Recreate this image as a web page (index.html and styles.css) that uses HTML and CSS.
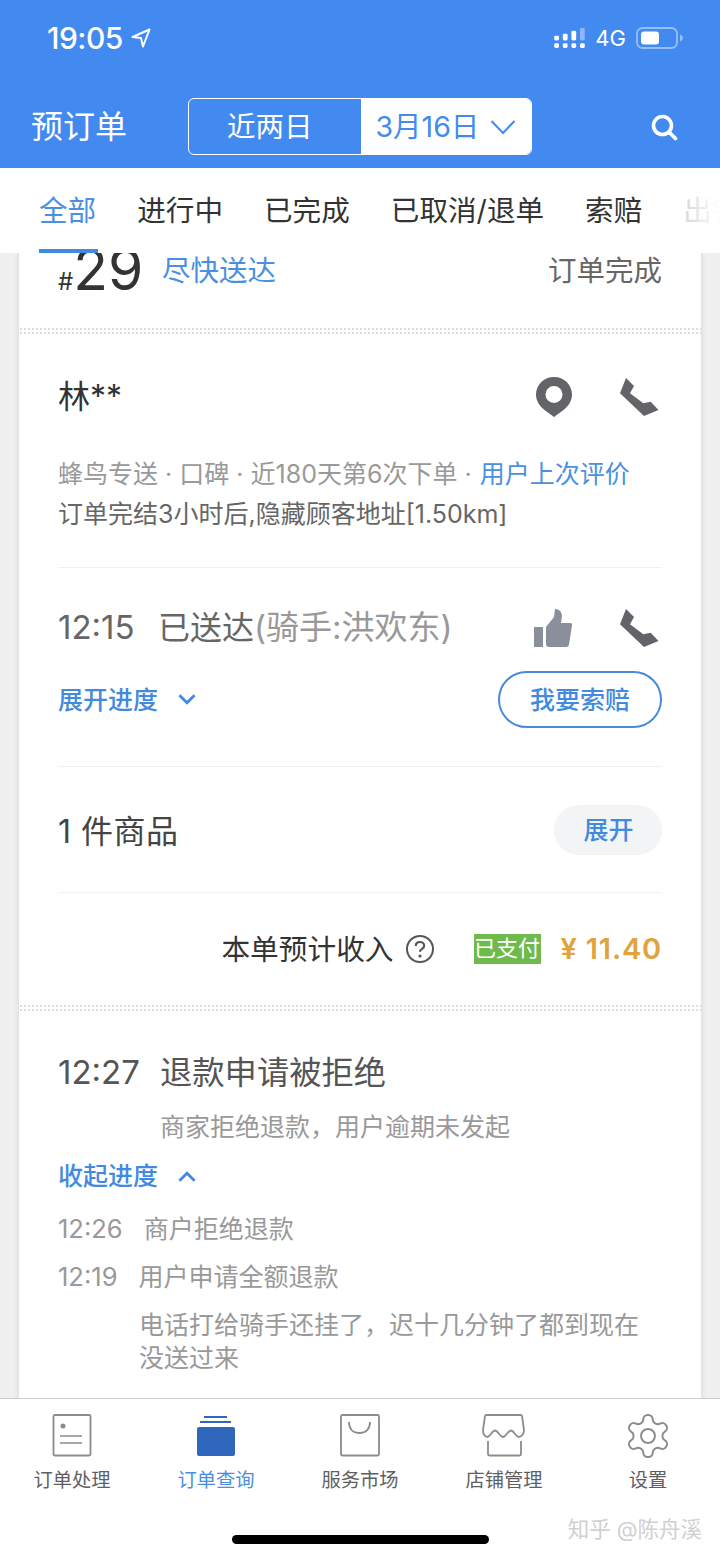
FILE: index.html
```html
<!DOCTYPE html>
<html lang="zh-CN">
<head>
  <meta charset="UTF-8" />
  <meta name="viewport" content="width=device-width, initial-scale=1.0"/>
  <title>预订单</title>
  <link rel="stylesheet" href="styles.css">
</head>
<body>

  <header class="top">
    <div class="status">
      <div class="status-left">
        <span class="clock">19:05</span>
        <svg class="arrow" viewBox="0 0 20 20"><path d="M18.5 1.5 1.5 9l8.5 1 2 8.500z" fill="none" stroke="#fff" stroke-width="2" stroke-linejoin="round"/></svg>
      </div>
      <div class="status-right">
        <svg class="signal" viewBox="0 0 32 22" fill="#fff">
          <rect x="0" y="8" width="5" height="5" rx="1.500"/><rect x="0" y="16" width="5" height="5" rx="1.500"/>
          <rect x="9" y="6" width="5" height="7" rx="1.500"/><rect x="9" y="16" width="5" height="5" rx="1.500"/>
          <rect x="18" y="3" width="5" height="10" rx="1.500"/><rect x="18" y="16" width="5" height="5" rx="1.500"/>
          <rect x="27" y="0" width="5" height="13" rx="1.500" opacity=".4"/><rect x="27" y="16" width="5" height="5" rx="1.500"/>
        </svg>
        <span class="net">4G</span>
        <svg class="battery" viewBox="0 0 48 22">
          <rect x="1" y="1" width="40" height="20" rx="5.500" fill="none" stroke="#fff" stroke-opacity=".45" stroke-width="1.800"/>
          <rect x="5" y="4.500" width="18" height="13" rx="3" fill="#fff"/>
          <path d="M44 7.500c2 .8 3 2 3 3.500s-1 2.700-3 3.500z" fill="#fff" fill-opacity=".45"/>
        </svg>
      </div>
    </div>
    <div class="nav">
      <div class="nav-title">预订单</div>
      <div class="segment">
        <div class="seg-item">近两日</div>
        <div class="seg-item seg-on">3月16日
          <svg class="seg-arrow" viewBox="0 0 26 16"><path d="M1.500 2 13 14 24.500 2" fill="none" stroke="#428af0" stroke-width="2"/></svg>
        </div>
      </div>
      <svg class="search" viewBox="0 0 28 28"><circle cx="12.500" cy="12.500" r="9" fill="none" stroke="#fff" stroke-width="3.600"/><path d="m19 19 6.500 6.500" stroke="#fff" stroke-width="3.800" stroke-linecap="round"/></svg>
    </div>
  </header>

  <nav class="tabs">
    <a class="tab tab-on">全部</a>
    <a class="tab">进行中</a>
    <a class="tab">已完成</a>
    <a class="tab">已取消/退单</a>
    <a class="tab">索赔</a>
    <a class="tab tab-off">出错</a>
  </nav>

  <main class="list">
    <section class="card">
      <div class="order-head">
        <div class="order-no"><span class="hash">#</span><span class="num">29</span></div>
        <div class="order-tag">尽快送达</div>
        <div class="order-state">订单完成</div>
      </div>
      <div class="dots"></div>

      <div class="customer">
        <div class="row-between">
          <div class="customer-name">林**</div>
          <div class="icon-pair">
            <svg class="ico-pin" viewBox="0 0 36 40"><path fill-rule="evenodd" d="M18 0C8 0 0 7.800 0 17.500 0 24 4 29.500 8.500 33L18 40l9.500-7C32 29.500 36 24 36 17.500 36 7.800 28 0 18 0zm0 9a8.500 8.500 0 1 1 0 17 8.500 8.500 0 0 1 0-17z" fill="#636468"/></svg>
            <svg class="ico-phone" viewBox="0 0 40 40"><path d="M6 1l8 8-4 7.300L23.300 26.300l7.400-1.600L38.500 33 24 39 0 16.300z" fill="#636468"/></svg>
          </div>
        </div>
        <p class="meta">蜂鸟专送 · 口碑 · 近180天第6次下单 · <span class="link">用户上次评价</span></p>
        <p class="meta meta-dark">订单完结3小时后,隐藏顾客地址[1.50km]</p>
      </div>

      <div class="rule"></div>

      <div class="delivery">
        <div class="row-between">
          <div class="delivery-text"><span class="time time-short">12:15</span><span class="delivery-state">已送达</span><span class="rider">(骑手:洪欢东)</span></div>
          <div class="icon-pair">
            <svg class="ico-thumb" viewBox="0 0 38 38"><rect x="0" y="18" width="9" height="20" fill="#8b8e9b"/><path d="M12 18 20 8l1-8c4 0 7 3 7 7l-1 7h9c1.500 0 2.300 1 2 2.500l-3 19c-.3 1.500-1 2.500-3 2.500H15c-2 0-3-1-3-3z" fill="#8b8e9b"/></svg>
            <svg class="ico-phone" viewBox="0 0 40 40"><path d="M6 1l8 8-4 7.300L23.300 26.300l7.400-1.600L38.500 33 24 39 0 16.300z" fill="#636468"/></svg>
          </div>
        </div>
        <div class="row-between delivery-more">
          <div class="toggle">展开进度
            <svg class="chev" viewBox="0 0 18 12"><path d="m2 2 7 7 7-7" fill="none" stroke="#428ae0" stroke-width="2.600"/></svg>
          </div>
          <button class="claim">我要索赔</button>
        </div>
      </div>

      <div class="rule"></div>

      <div class="goods">
        <div class="goods-count">1 件商品</div>
        <button class="expand">展开</button>
      </div>

      <div class="rule"></div>

      <div class="income">
        <span class="income-label">本单预计收入</span>
        <svg class="ico-help" viewBox="0 0 30 30"><circle cx="15" cy="15" r="13" fill="none" stroke="#55565a" stroke-width="2"/><path d="M10.800 12c0-2.500 1.900-4 4.200-4s4.200 1.500 4.200 3.800c0 3.200-4.200 3-4.200 6" fill="none" stroke="#55565a" stroke-width="2.200"/><circle cx="15" cy="22" r="1.600" fill="#55565a"/></svg>
        <span class="paid">已支付</span>
        <span class="amount">¥ 11.40</span>
      </div>
      <div class="dots"></div>

      <div class="refund">
        <div class="refund-head"><span class="time">12:27</span><span class="refund-title">退款申请被拒绝</span></div>
        <p class="refund-sub">商家拒绝退款，用户逾期未发起</p>
        <div class="toggle refund-toggle">收起进度
          <svg class="chev" viewBox="0 0 18 12"><path d="m2 10 7-7 7 7" fill="none" stroke="#428ae0" stroke-width="2.600"/></svg>
        </div>
        <div class="log log-first"><span class="log-time">12:26</span><span>商户拒绝退款</span></div>
        <div class="log"><span class="log-time">12:19</span><span>用户申请全额退款</span></div>
        <p class="log-note">电话打给骑手还挂了，迟十几分钟了都到现在没送过来</p>
      </div>
    </section>
  </main>

  <footer class="bottom">
    <div class="bar">
      <div class="bar-item">
        <svg class="bar-ico" viewBox="0 0 44 44"><rect x="3.500" y="1" width="37" height="40.500" rx="1.500" fill="none" stroke="#8c8c8c" stroke-width="1.800"/><circle cx="13" cy="12" r="2.500" fill="#8c8c8c"/><path d="M10 22h22M10 29h22" stroke="#8c8c8c" stroke-width="1.600"/></svg>
        <span>订单处理</span>
      </div>
      <div class="bar-item bar-on">
        <svg class="bar-ico" viewBox="0 0 44 44"><path d="M10 3h23M6 8h31" stroke="#2f67bd" stroke-width="1.800"/><rect x="3" y="13" width="38" height="29" rx="2" fill="#2f67bd"/></svg>
        <span>订单查询</span>
      </div>
      <div class="bar-item">
        <svg class="bar-ico" viewBox="0 0 44 44"><rect x="3" y="1" width="38" height="40.500" rx="1.500" fill="none" stroke="#8c8c8c" stroke-width="1.800"/><path d="M11 8c0 7 4 11 10.500 11S32 15 32 8" fill="none" stroke="#8c8c8c" stroke-width="1.800"/></svg>
        <span>服务市场</span>
      </div>
      <div class="bar-item">
        <svg class="bar-ico" viewBox="0 0 44 44"><path d="M4.500 1h34c1 0 1.500.5 1.600 1.500L42 16c0 3-2 6-5 7-3 .5-5-6.500-8-6.500S24 23 21 23s-5-6.500-8-6.500S8 23.500 5 23c-3-1-4-4-4-7L2.900 2.500C3 1.500 3.500 1 4.500 1z" fill="none" stroke="#8c8c8c" stroke-width="1.800" stroke-linejoin="round"/><path d="M6 27v13c0 1 .5 1.500 1.500 1.500h30c1 0 1.500-.5 1.500-1.500V27" fill="none" stroke="#8c8c8c" stroke-width="1.800"/></svg>
        <span>店铺管理</span>
      </div>
      <div class="bar-item">
        <svg class="bar-ico bar-gear" viewBox="0 0 24 24"><path d="M12.220 2h-.44a2 2 0 0 0-2 2v.18a2 2 0 0 1-1 1.730l-.43.25a2 2 0 0 1-2 0l-.15-.08a2 2 0 0 0-2.730.73l-.22.38a2 2 0 0 0 .73 2.730l.15.1a2 2 0 0 1 1 1.720v.51a2 2 0 0 1-1 1.740l-.15.09a2 2 0 0 0-.73 2.730l.22.38a2 2 0 0 0 2.730.73l.15-.08a2 2 0 0 1 2 0l.43.25a2 2 0 0 1 1 1.730V20a2 2 0 0 0 2 2h.44a2 2 0 0 0 2-2v-.18a2 2 0 0 1 1-1.730l.43-.25a2 2 0 0 1 2 0l.15.08a2 2 0 0 0 2.730-.73l.22-.39a2 2 0 0 0-.73-2.730l-.15-.08a2 2 0 0 1-1-1.740v-.5a2 2 0 0 1 1-1.740l.15-.09a2 2 0 0 0 .73-2.730l-.22-.38a2 2 0 0 0-2.730-.73l-.15.08a2 2 0 0 1-2 0l-.43-.25a2 2 0 0 1-1-1.730V4a2 2 0 0 0-2-2z" fill="none" stroke="#8c8c8c" stroke-width=".95"/><circle cx="12" cy="12" r="3.300" fill="none" stroke="#8c8c8c" stroke-width=".95"/></svg>
        <span>设置</span>
      </div>
    </div>
    <div class="home-line"></div>
    <div class="watermark">知乎 @陈舟溪</div>
  </footer>

</body>
</html>
```

FILE: styles.css
```css
* {
  box-sizing: border-box;
}

html, body {
  margin: 0;
  padding: 0;
}

body {
  width: 720px;
  height: 1558px;
  overflow: hidden;
  display: flex;
  flex-direction: column;
  background: #f0f0f0;
  color: #333;
  font-family: Inter, 'Noto Sans CJK SC', sans-serif;
  font-weight: 400;
}

p {
  margin: 0;
}

/* header */
.top {
  height: 168px;
  background: #428af0;
  color: #fff;
  flex: none;
}

.status {
  height: 76px;
  display: flex;
  justify-content: space-between;
  align-items: center;
  padding: 0 36px 0 47px;
}

.status-left, .status-right {
  display: flex;
  align-items: center;
}

.clock {
  font-size: 30px;
  font-weight: 500;
  letter-spacing: -0.5px;
}

.arrow {
  width: 20px;
  height: 20px;
  margin-left: 8px;
}

.signal {
  width: 31px;
  height: 21px;
}

.net {
  font-size: 22px;
  margin: 0 10px 0 10px;
}

.battery {
  width: 48px;
  height: 22px;
}

.nav {
  height: 92px;
  display: flex;
  align-items: flex-start;
  padding: 22px 42px 0 31px;
}

.nav-title {
  width: 157px;
  line-height: 57px;
  font-size: 32px;
}

.segment {
  width: 345px;
  height: 57px;
  display: flex;
  border: 1px solid #fff;
  border-radius: 6px;
  overflow: hidden;
}

.seg-item {
  width: 172px;
  padding-right: 10px;
  line-height: 55px;
  text-align: center;
  font-size: 28.500px;
}

.seg-on {
  flex: 1;
  padding-right: 0;
  display: flex;
  align-items: center;
  justify-content: center;
  gap: 11px;
  background: #fff;
  color: #428af0;
}

.seg-arrow {
  width: 26px;
  height: 16px;
}

.search {
  width: 28px;
  height: 28px;
  margin: 15px 0 0 118px;
}

/* tabs */
.tabs {
  position: relative;
  z-index: 2;
  height: 85px;
  flex: none;
  display: flex;
  background: #fff;
  padding-left: 39px;
  gap: 41px;
  overflow: hidden;
  font-size: 28.600px;
  line-height: 85px;
}

.tabs::after {
  content: "";
  position: absolute;
  right: 0;
  top: 0;
  bottom: 0;
  width: 50px;
  background: linear-gradient(to right, rgba(255, 255, 255, 0.2), #fff);
}

.tab {
  position: relative;
  flex: none;
  color: #333;
}

.tab-on {
  color: #4a90e2;
}

.tab-on::after {
  content: "";
  position: absolute;
  left: 0;
  right: -2px;
  bottom: 0;
  height: 4px;
  background: #428ae0;
}

.tab-off {
  color: #bbb;
}

/* list */
.list {
  flex: 1;
  overflow: hidden;
  padding: 0 19px;
}

.card {
  background: #fff;
  box-shadow: 0 0 6px rgba(0, 0, 0, 0.12);
  padding-bottom: 40px;
}

.order-head {
  height: 78px;
  margin-top: -4px;
  display: flex;
  align-items: flex-start;
  padding: 0 39px;
}

.order-no {
  width: 104px;
  height: 50px;
  margin-top: -4px;
  line-height: 50px;
  white-space: nowrap;
  color: #333;
}

.hash {
  font-size: 24px;
}

.num {
  font-size: 57px;
}

.order-tag {
  margin-top: 2px;
  line-height: 40px;
  font-size: 28.500px;
  color: #4a90e2;
}

.order-state {
  margin: 2px 0 0 auto;
  line-height: 40px;
  font-size: 28.500px;
  color: #666;
}

.dots {
  height: 8px;
  background-image: radial-gradient(circle, #dcdcdc 1.100px, transparent 1.400px);
  background-size: 4px 4px;
}

.rule {
  height: 1px;
  margin: 0 39px;
  background: #f1f1f1;
}

.row-between {
  display: flex;
  justify-content: space-between;
  align-items: center;
}

.customer {
  height: 232px;
  padding: 42px 39px 0;
}

.customer-name {
  font-size: 32px;
  line-height: 40px;
}

.icon-pair {
  display: flex;
  align-items: center;
  width: 126px;
}

.ico-pin {
  width: 36px;
  height: 40px;
}

.ico-phone {
  width: 40px;
  height: 40px;
  margin-left: 48px;
}

.ico-thumb {
  width: 38px;
  height: 38px;
  margin-left: -2px;
}

.meta {
  margin-top: 37px;
  font-size: 25px;
  line-height: 40px;
  color: #999;
  white-space: nowrap;
}

.meta-dark {
  margin-top: 0;
  color: #666;
}

.link {
  margin-left: 1px;
  color: #4a90e2;
}

.delivery {
  height: 198px;
  padding: 39px 39px 0;
}

.delivery-text {
  font-size: 32px;
  line-height: 40px;
  color: #666;
  white-space: nowrap;
}

.time {
  display: inline-block;
  width: 102px;
  font-size: 33px;
  color: #555;
}

.time-short {
  width: 100px;
  color: #666;
}

.rider {
  font-size: 33px;
  color: #999;
}

.delivery-more {
  margin-top: 23px;
}

.toggle {
  display: flex;
  align-items: center;
  gap: 19px;
  font-size: 25px;
  font-weight: 500;
  line-height: 34px;
  color: #428ae0;
}

.chev {
  width: 20px;
  height: 13px;
}

.claim {
  width: 164px;
  height: 57px;
  border: 2px solid #4a8ade;
  border-radius: 29px;
  background: #fff;
  color: #428ae0;
  font: inherit;
  font-size: 25px;
  font-weight: 500;
  padding: 0 0 3px;
}

.goods {
  height: 125px;
  padding: 0 39px;
  display: flex;
  justify-content: space-between;
  align-items: center;
}

.goods-count {
  font-size: 32px;
  letter-spacing: 0.5px;
  margin-top: -2px;
  color: #444;
}

.expand {
  width: 108px;
  height: 50px;
  border: none;
  border-radius: 25px;
  background: #f3f4f5;
  color: #428ae0;
  font: inherit;
  font-size: 25px;
  font-weight: 500;
  padding: 0 0 3px 1px;
}

.income {
  height: 111px;
  padding: 0 39px;
  display: flex;
  justify-content: flex-end;
  align-items: center;
}

.income-label {
  margin-top: -3px;
  font-size: 28.700px;
}

.ico-help {
  width: 30px;
  height: 30px;
  margin: 0 0 0 11px;
}

.paid {
  width: 67px;
  height: 30px;
  margin-left: 39px;
  background: #6fba4c;
  color: #fff;
  font-size: 22px;
  line-height: 28px;
  text-align: center;
}

.amount {
  margin-left: 20px;
  color: #e0a33e;
  font-size: 29px;
  font-weight: 600;
  letter-spacing: 0.8px;
}

.refund {
  padding: 38px 39px 0;
}

.refund-head {
  line-height: 44px;
  white-space: nowrap;
}

.refund-title {
  font-size: 32.300px;
  color: #555;
}

.refund-sub {
  margin: 10px 0 0 102px;
  font-size: 25px;
  line-height: 34px;
  color: #999;
}

.refund-toggle {
  margin-top: 15px;
}

.log {
  margin-top: 14px;
  font-size: 25px;
  line-height: 34px;
  color: #999;
  white-space: nowrap;
}

.log-first {
  margin-top: 19px;
}

.log-time {
  margin-right: 21px;
  font-size: 25.500px;
}

.log-note {
  margin: 15px 0 0 81px;
  font-size: 25px;
  line-height: 33px;
  color: #999;
}

/* bottom bar */
.bottom {
  position: relative;
  z-index: 2;
  height: 160px;
  flex: none;
  background: #fff;
  border-top: 1px solid #ccc;
}

.bar {
  display: flex;
  padding-top: 15px;
}

.bar-item {
  width: 144px;
  display: flex;
  flex-direction: column;
  align-items: center;
  gap: 8px;
  font-size: 19.300px;
  line-height: 28px;
  color: #5f5f5f;
}

.bar-on {
  color: #4a90e2;
}

.bar-ico {
  width: 44px;
  height: 44px;
}

.bar-gear {
  transform: scale(1.150);
}

.home-line {
  width: 257px;
  height: 9px;
  margin: 41px auto 0;
  border-radius: 5px;
  background: #000;
}

.watermark {
  position: absolute;
  right: 18px;
  top: 116px;
  font-size: 21.500px;
  line-height: 28px;
  color: #d0d0d0;
}
```
